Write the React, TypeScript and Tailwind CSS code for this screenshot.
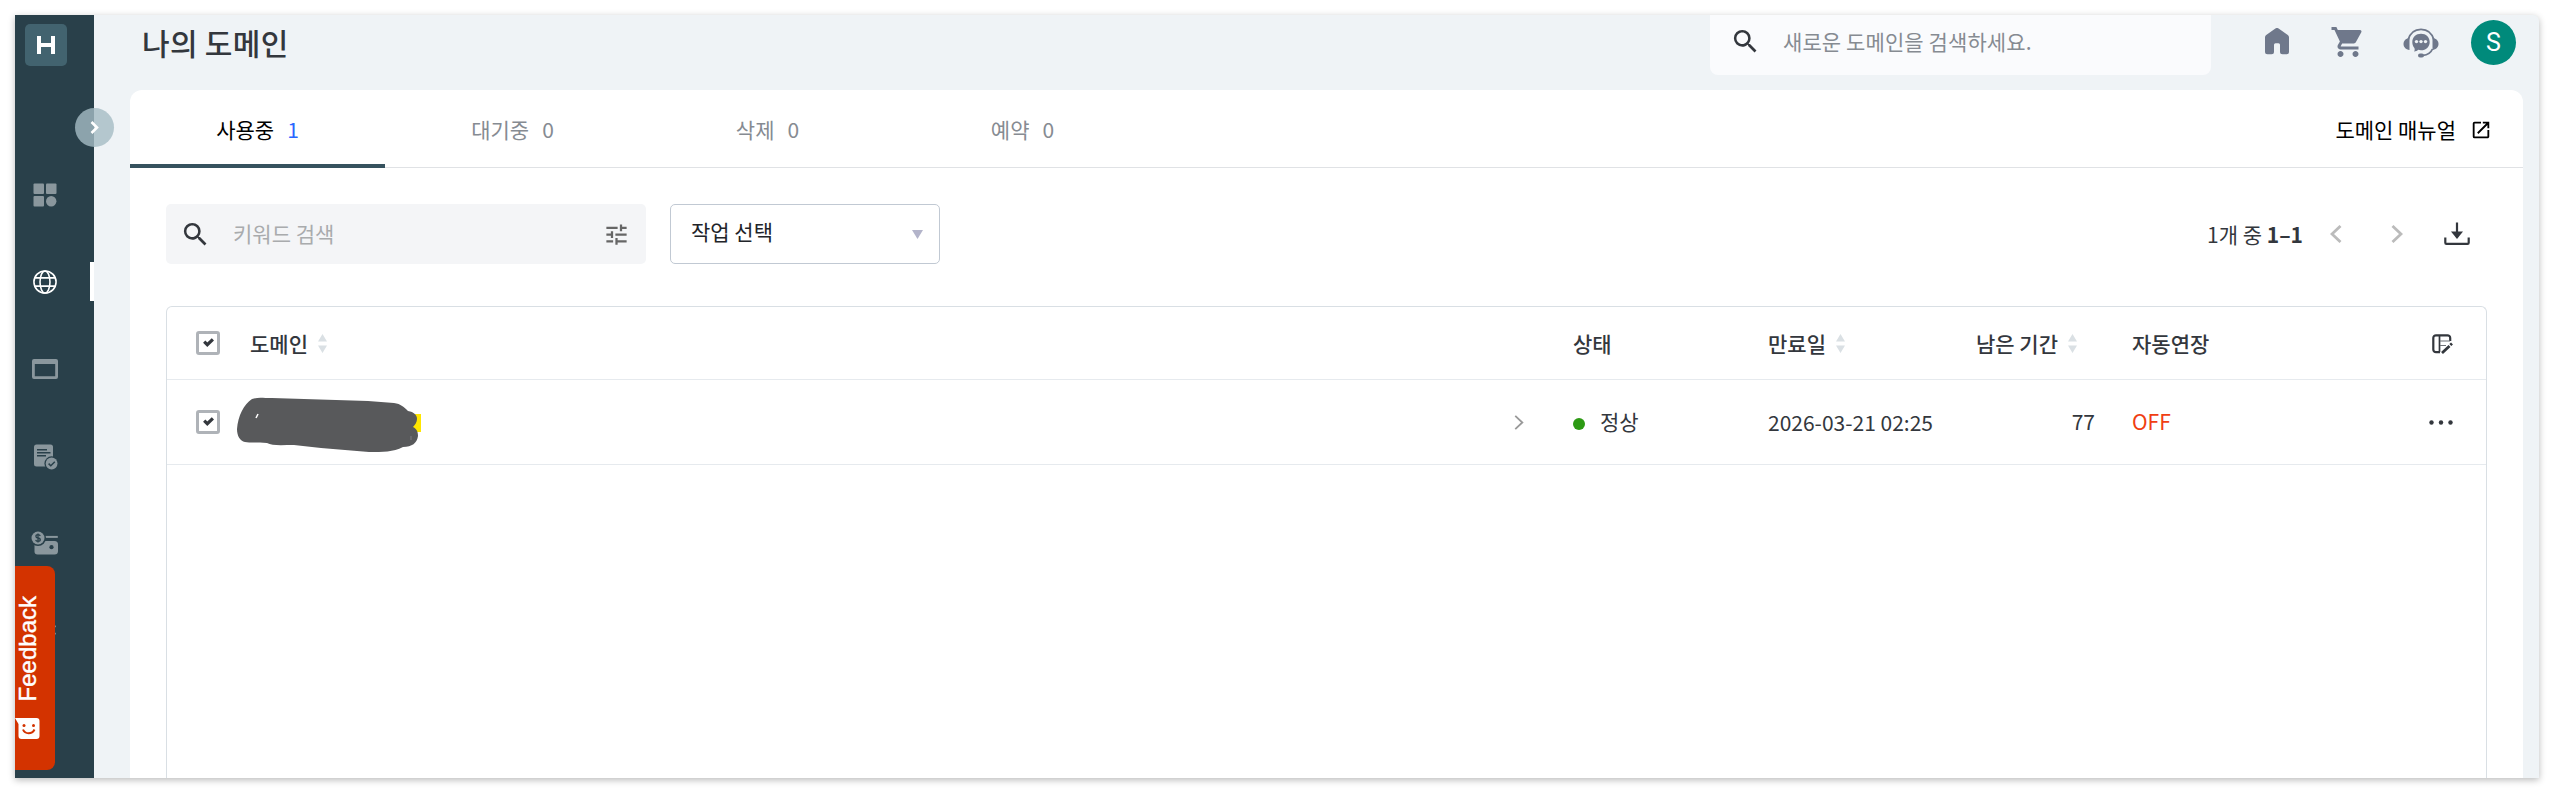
import type { ReactNode } from "react";
import { MdSearch, MdOutlineTune, MdOpenInNew, MdShoppingCart } from "react-icons/md";

const tabs = [
  { label: "사용중", count: 1, active: true },
  { label: "대기중", count: 0, active: false },
  { label: "삭제", count: 0, active: false },
  { label: "예약", count: 0, active: false },
];

function DashboardIcon() {
  return (
    <svg width="24" height="24" viewBox="0 0 24 24" fill="currentColor">
      <rect x="0.5" y="0.5" width="10.5" height="10.5" rx="1" />
      <rect x="13" y="0.5" width="10.5" height="10.5" rx="1" />
      <rect x="0.5" y="13" width="10.5" height="10.5" rx="1" />
      <circle cx="18.2" cy="18.2" r="5.2" />
    </svg>
  );
}

function GlobeIcon() {
  return (
    <svg width="26" height="26" viewBox="0 0 26 26" fill="none" stroke="currentColor" strokeWidth="1.7">
      <circle cx="13" cy="13" r="12" />
      <ellipse cx="13" cy="13" rx="5.4" ry="12" />
      <path d="M2 8.5h22M2 17.5h22" />
    </svg>
  );
}

function WindowIcon() {
  return (
    <svg width="26" height="20" viewBox="0 0 26 20" className="shrink-0" fill="currentColor" fillRule="evenodd">
      <path d="M2 0h22a2 2 0 0 1 2 2v16a2 2 0 0 1-2 2H2a2 2 0 0 1-2-2V2a2 2 0 0 1 2-2ZM2.8 5v12.3h20.4V5Z" />
    </svg>
  );
}

function OrderIcon() {
  return (
    <svg width="26" height="26" viewBox="0 0 26 26" className="mt-[3px] shrink-0" fill="currentColor">
      <rect x="2" y="0.5" width="19" height="22" rx="2.5" />
      <path d="M5 5.8h10M5 8.8h13.5M5 11.7h9" stroke="#29404a" strokeWidth="1.5" fill="none" />
      <circle cx="19.6" cy="19.5" r="7.2" fill="#29404a" />
      <circle cx="19.6" cy="19.5" r="5.9" />
      <path d="m16.6 19.6 2.2 2.2 4-4" stroke="#29404a" strokeWidth="1.5" fill="none" />
    </svg>
  );
}

function WalletIcon() {
  return (
    <svg width="28" height="24" viewBox="0 0 28 24" className="shrink-0" fill="currentColor">
      <path d="M3.500 10h20a3.500 3.500 0 0 1 3.500 3.500v6.500a3.500 3.500 0 0 1-3.500 3.500h-17a3 3 0 0 1-3-3Z" />
      <path d="M14 5.900h12.800" stroke="currentColor" strokeWidth="2" />
      <circle cx="7" cy="7" r="8" fill="#29404a" />
      <circle cx="7" cy="7" r="6.500" />
      <circle cx="20.500" cy="16.200" r="2.100" fill="#29404a" />
      <path
        d="M9.200 5c-.3-1-1.200-1.300-2.200-1.300-2.800 0-2.800 3 0 3.300 3 .3 3 3.400 0 3.400-1.200 0-2.100-.5-2.300-1.500M7 2.500v9"
        fill="none"
        stroke="#29404a"
        strokeWidth="1.300"
      />
    </svg>
  );
}

function GearIcon() {
  return (
    <svg width="28" height="28" viewBox="0 0 24 24" className="shrink-0" fill="currentColor">
      <path d="M19.140 12.940c.04-.3.060-.61.060-.94 0-.32-.02-.64-.07-.94l2.030-1.580a.49.49 0 0 0 .12-.61l-1.920-3.320a.488.488 0 0 0-.59-.22l-2.390.96c-.5-.38-1.030-.7-1.620-.94l-.36-2.540a.484.484 0 0 0-.48-.41h-3.840c-.24 0-.43.17-.47.41l-.36 2.540c-.59.24-1.130.57-1.620.94l-2.390-.96c-.22-.08-.47 0-.59.22L2.740 8.870c-.12.21-.08.47.12.61l2.030 1.580c-.05.3-.09.63-.09.94s.02.64.07.94l-2.030 1.580a.49.49 0 0 0-.12.61l1.920 3.320c.12.22.37.29.59.22l2.390-.96c.5.38 1.030.7 1.620.94l.36 2.540c.05.24.24.41.48.41h3.840c.24 0 .44-.17.47-.41l.36-2.540c.59-.24 1.130-.56 1.620-.94l2.390.96c.22.08.47 0 .59-.22l1.920-3.320a.47.47 0 0 0-.12-.61l-2.010-1.580Z" />
    </svg>
  );
}

function HomeIcon() {
  return (
    <svg width="24" height="27" viewBox="0 0 24 27" fill="currentColor">
      <path d="M10.400.6a2.500 2.500 0 0 1 3.200 0l9.200 6.400A3 3 0 0 1 24 9.500v14.300a2.500 2.500 0 0 1-2.500 2.500h-4a2.500 2.500 0 0 1-2.500-2.500v-7a1.500 1.500 0 0 0-1.500-1.500h-3a1.500 1.500 0 0 0-1.500 1.500v7a2.500 2.500 0 0 1-2.500 2.500h-4A2.500 2.500 0 0 1 0 23.800V9.500A3 3 0 0 1 1.200 7Z" />
    </svg>
  );
}

function SupportIcon() {
  return (
    <svg width="36" height="30" viewBox="0 0 36 30" fill="currentColor">
      <path d="M5 12C7 5 12 1.300 18 1.300S29 5 31 12" fill="none" stroke="currentColor" strokeWidth="1.800" />
      <path d="M6.500 10v12C2.800 21.500.5 19 .5 16s2-5.500 6-6ZM29.500 10v12c3.700-.5 6-3 6-6s-2-5.500-6-6Z" />
      <path d="M29.500 21c-1.500 3.500-4.500 6-9.500 6.300" fill="none" stroke="currentColor" strokeWidth="1.800" />
      <rect x="15" y="25.400" width="6" height="4" rx="2" />
      <path d="M18 5.700c5 0 8.700 3.500 8.700 8.200S23 22.200 18 22.200c-1 0-2 0-2.800-.4-1 1-2.200 1.700-4.200 1.700.8-1 .9-2 .4-3.500-1.400-1.500-2.100-3.600-2.100-6 0-4.800 3.700-8.300 8.700-8.300Z" />
      <g fill="#eff3f6">
        <circle cx="13.500" cy="13.600" r="1.700" />
        <circle cx="18" cy="13.600" r="1.700" />
        <circle cx="22.500" cy="13.600" r="1.700" />
      </g>
    </svg>
  );
}

function Chevron({ left, className, size = 18, stroke = 2.800 }: { left?: boolean; className: string; size?: number; stroke?: number }) {
  return (
    <svg width={(size * 12) / 18} height={size} viewBox="0 0 12 18" fill="none" stroke="currentColor" strokeWidth={stroke} className={className}>
      <path d={left ? "M10.500 1 2 9l8.500 8" : "M1.500 1 10 9l-8.500 8"} />
    </svg>
  );
}

function DownloadIcon() {
  return (
    <svg width="26" height="24" viewBox="0 0 26 24" fill="none" stroke="#33373d" strokeWidth="2.200">
      <path d="M1.300 15.500v5.300c0 .7.400 1.100 1.100 1.100h21.200c.7 0 1.100-.4 1.100-1.100v-5.300M13 .5v10" />
      <path d="M7 9.500h12L13 17Z" fill="#33373d" stroke="none" />
    </svg>
  );
}

function ColumnEditIcon() {
  return (
    <svg width="21" height="20" viewBox="0 0 21 20" fill="none" stroke="#33373d" strokeWidth="2.200">
      <path d="M18.200 7V4a2.700 2.700 0 0 0-2.700-2.700H4A2.700 2.700 0 0 0 1.300 4v11.500A2.700 2.700 0 0 0 4 18.200h4" />
      <path d="M7.500 1.500v16.500" strokeWidth="1.700" />
      <path d="M8 7h10M8 11.500h6" strokeWidth="1.200" stroke="#6d7177" />
      <path d="m10 19 7.500-7M18.300 11l1.700-1.600" strokeWidth="2.800" />
    </svg>
  );
}

function SortArrows() {
  return (
    <svg width="9" height="19" viewBox="0 0 9 19" fill="#dae0e4">
      <path d="M4.500 0 9 7.500H0ZM4.500 19 9 11.500H0Z" />
    </svg>
  );
}

function Checkbox() {
  return (
    <span className="flex size-6 items-center justify-center rounded-[3px] border-[3px] border-[#afb3b8] bg-white">
      <svg className="-mt-px" width="11" height="9" viewBox="0 0 11 9" fill="none" stroke="#33373d" strokeWidth="3.200">
        <path d="m1.200 3.700 3.100 3L9.900 1.400" />
      </svg>
    </span>
  );
}

/** Marker strokes covering the domain name. */
function Redaction() {
  return (
    <svg width="185" height="56" viewBox="0 0 185 56">
      <path d="M170 17h14v18h-14Z" fill="#ffe600" />
      <path
        d="M15 2c6-2 10-1 20-1l96 3 26 2c7 1 10 4 14 8 6 1 9 4 9 8 0 3-2 6-4 8 4 2 5 5 5 9-1 7-6 11-15 11-10 5-20 5-34 5l-48-4-27-3c-12 0-22 1-27-2-10-1-17 0-22-1-5-1-8-6-8-13C1 19 7 7 15 2Z"
        fill="#58595b"
      />
      <path d="m19 21 2-4" stroke="#fff" strokeWidth="1.500" />
      <path d="M174 39v4" stroke="#85868a" strokeWidth="0.800" />
    </svg>
  );
}

function NavItem({ active, children }: { active?: boolean; children: ReactNode }) {
  return (
    <li className={active ? "flex h-[87px] items-center justify-between text-white" : "flex h-[87px] items-center text-[#8a979d]"}>
      <span className="flex w-6 justify-center">{children}</span>
      {active && <span className="h-[39px] w-1 bg-white" />}
    </li>
  );
}

function Sidebar() {
  return (
    <aside className="relative z-10 w-[79px] shrink-0 bg-[#29404a]">
      <div className="ml-2.5 mt-[9px] flex size-[42px] items-center justify-center rounded-[5px] bg-[#42636f]">
        <svg width="18" height="18" viewBox="0 0 18 18" fill="none" stroke="#fff" strokeWidth="4">
          <path d="M2 0v18M16 0v18M2 9h14" />
        </svg>
      </div>
      <ul className="mt-[85px] pl-[17.500px]">
        <NavItem><DashboardIcon /></NavItem>
        <NavItem active><GlobeIcon /></NavItem>
        <NavItem><WindowIcon /></NavItem>
        <NavItem><OrderIcon /></NavItem>
        <NavItem><WalletIcon /></NavItem>
        <NavItem><GearIcon /></NavItem>
      </ul>
      <button className="absolute left-[59.500px] top-[93px] flex size-[39px] items-center justify-center rounded-full bg-[#a5bbc4]/80 text-white">
        <svg width="9" height="13" viewBox="0 0 9 13" fill="none" stroke="currentColor" strokeWidth="2.600">
          <path d="m1.500 1 5.500 5.500L1.500 12" />
        </svg>
      </button>
      <div className="absolute left-0 top-[551px] h-[204px] w-10 rounded-r-lg bg-[#d33300] text-white">
        <span className="absolute left-[-1px] top-[29.500px] rotate-180 font-['Liberation_Sans'] text-[24px] leading-[28px] [-webkit-text-stroke:0.4px_white] [writing-mode:vertical-rl]">
          Feedback
        </span>
        <svg className="absolute left-0 top-[152px]" width="25" height="22" viewBox="0 0 25 22">
          <path d="M0 0h21.500a3 3 0 0 1 3 3v15a3 3 0 0 1-3 3h-15a3 3 0 0 1-3-3V6Z" fill="#fff" />
          <path d="M8 11.500c2 5 9 5 11.500 0" fill="none" stroke="#d33300" strokeWidth="2" />
          <circle cx="9" cy="7.500" r="1.500" fill="#d33300" />
          <circle cx="18.500" cy="7.500" r="1.500" fill="#d33300" />
        </svg>
      </div>
    </aside>
  );
}

function Header() {
  return (
    <header className="flex h-[75px] shrink-0 items-start pl-[48px] pr-[23px]">
      <h1 className="pt-[5px] text-[30px] font-medium leading-[44px] tracking-[0.3px] text-[#33373d]">나의 도메인</h1>
      <div className="ml-auto flex h-[60px] w-[501px] items-center rounded-b-lg bg-[#fafbfd] pb-[7px] pl-[20px]">
        <MdSearch className="size-[31px] text-[#33373d]" />
        <span className="ml-[22px] text-[21px] tracking-[0.100px] text-[#868b92]">새로운 도메인을 검색하세요.</span>
      </div>
      <div className="flex items-center text-[#6f788b]">
        <span className="ml-[54px] mt-[13px] self-start"><HomeIcon /></span>
        <MdShoppingCart className="ml-[41px] mt-[9px] size-[36px] self-start" />
        <span className="ml-[37px] mt-[13px] self-start"><SupportIcon /></span>
        <span className="ml-[32px] mt-[5px] flex size-[45px] items-center justify-center rounded-full bg-[#008a7b] pt-px font-[Roboto] text-[25px] text-white">
          S
        </span>
      </div>
    </header>
  );
}

function Toolbar() {
  return (
    <div className="flex h-[60px] items-center">
      <div className="flex h-full w-[480px] items-center rounded-[5px] bg-[#f4f5f7] pl-[14px] pr-[16px]">
        <MdSearch className="size-[31px] text-[#33373d]" />
        <span className="ml-[22px] text-[21px] text-[#a9abad]">키워드 검색</span>
        <MdOutlineTune className="ml-auto size-[27px] text-[#666]" />
      </div>
      <button className="ml-6 flex h-full w-[270px] items-center rounded-[5px] border border-[#c1c9d3] pb-[5px] pl-[20px] pr-4 text-[21px] text-[#222429]">
        작업 선택
        <svg className="ml-auto mt-[6px]" width="11" height="9" viewBox="0 0 11 9" fill="#b3b4ca">
          <path d="M0 0h11L5.500 9Z" />
        </svg>
      </button>
      <div className="ml-auto flex items-center pr-[17px]">
        <span className="pt-px text-[21px] text-[#33373d]">
          1개 중 <b>1–1</b>
        </span>
        <Chevron left className="ml-[27px] text-[#bbb]" />
        <Chevron className="ml-[49px] text-[#bbb]" />
        <span className="ml-[41px]"><DownloadIcon /></span>
      </div>
    </div>
  );
}

function DomainTable() {
  const cols = "grid grid-cols-[83px_1264px_59px_195px_208px_156px_1fr] items-center text-[21px] text-[#33373d]";
  return (
    <div className="mt-[42px] flex-1 rounded-t-md border border-b-0 border-[#d9dfe4]">
      <div className={`${cols} h-[73px] border-b border-[#e6eaee] font-medium`}>
        <span className="pl-[29px]"><Checkbox /></span>
        <span className="flex items-center gap-2.5 pt-px">도메인 <SortArrows /></span>
        <span />
        <span className="pt-px">상태</span>
        <span className="flex items-center gap-2.5 pt-px">만료일 <SortArrows /></span>
        <span className="flex items-center gap-2.5 pt-px">남은 기간 <SortArrows /></span>
        <span className="flex items-center justify-between pr-[33px] pt-px">
          자동연장 <ColumnEditIcon />
        </span>
      </div>
      <div className={`${cols} h-[85px] border-b border-[#e6eaee]`}>
        <span className="pl-[29px]"><Checkbox /></span>
        <span className="-ml-[13px] pt-[5px]"><Redaction /></span>
        <Chevron className="text-[#999]" size={15} stroke={2.200} />
        <span className="flex items-center gap-[15px]">
          <i className="mt-[3px] size-3 rounded-full bg-[#2d9a14]" />
          정상
        </span>
        <span className="pt-px">2026-03-21 02:25</span>
        <span className="pr-[37px] text-right">77</span>
        <span className="flex items-center justify-between pr-[33px]">
          <span className="text-[#f03e12]">OFF</span>
          <svg width="24" height="5" viewBox="0 0 24 5" fill="#33373d">
            <circle cx="2.500" cy="2.500" r="2.200" />
            <circle cx="12" cy="2.500" r="2.200" />
            <circle cx="21.500" cy="2.500" r="2.200" />
          </svg>
        </span>
      </div>
    </div>
  );
}

export default function App() {
  return (
    <div className="h-[793px] w-[2553px] overflow-hidden bg-white pl-[15px] pt-[15px] font-['Noto_Sans_CJK_KR','Noto_Sans_CJK_SC',sans-serif]">
      <div className="flex h-[763px] w-[2524px] rounded-tr-md bg-[#eff3f6] shadow-[0_2px_7px_rgba(0,0,0,0.28)]">
        <Sidebar />
        <div className="flex min-w-0 flex-1 flex-col">
          <Header />
          <main className="ml-9 mr-[16px] flex flex-1 flex-col rounded-t-[12px] bg-white">
            <nav className="flex h-[78px] items-stretch border-b border-[#e0e2e5] text-[21px]">
              {tabs.map((tab) => (
                <a
                  key={tab.label}
                  className={
                    tab.active
                      ? "-mb-px flex w-[255px] items-center justify-center gap-[13px] border-b-4 border-[#36525e] pt-[5px] text-black"
                      : "flex w-[255px] items-center justify-center gap-[13px] pt-[2px] text-[#868b92]"
                  }
                >
                  {tab.label}
                  <span className={tab.active ? "text-[#2a66ff]" : ""}>{tab.count}</span>
                </a>
              ))}
              <a className="ml-auto flex items-center gap-[14px] pr-[31px] pt-[2px] text-black">
                도메인 매뉴얼
                <MdOpenInNew className="size-[22px]" />
              </a>
            </nav>
            <div className="flex flex-1 flex-col px-9 pt-9">
              <Toolbar />
              <DomainTable />
            </div>
          </main>
        </div>
      </div>
    </div>
  );
}
